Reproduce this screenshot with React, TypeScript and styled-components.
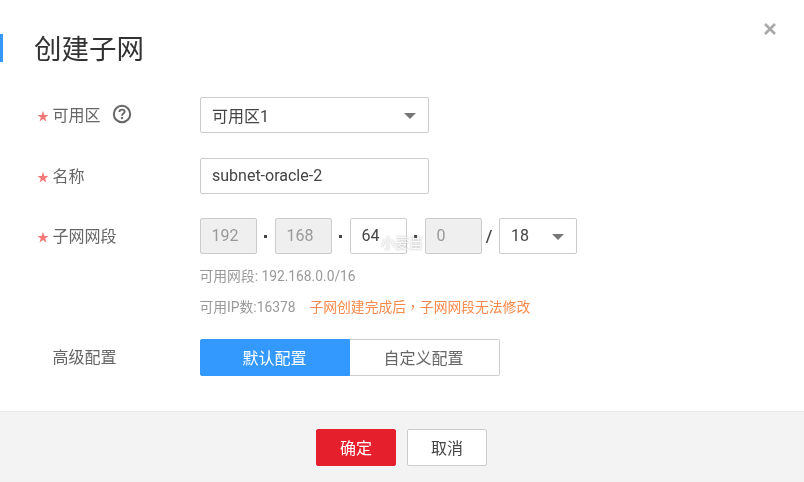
import React from 'react'
import styled, { createGlobalStyle } from 'styled-components'

const GlobalStyle = createGlobalStyle`
  html, body {
    margin: 0;
    padding: 0;
    background: #fff;
  }
  * {
    box-sizing: border-box;
  }
`

const Dialog = styled.div`
  position: relative;
  width: 804px;
  height: 482px;
  overflow: hidden;
  display: flex;
  flex-direction: column;
  background: #fff;
  font-family: Roboto, "Noto Sans CJK SC", sans-serif;
  color: #666;
  filter: blur(0.45px);
`

const Header = styled.div`
  height: 28px;
  margin-top: 34px;
  display: flex;
  align-items: center;
  justify-content: space-between;
  border-left: 3px solid #3399ff;
  padding-left: 31px;
`

const Title = styled.h1`
  margin: 0;
  padding-top: 3px;
  font-size: 27.5px;
  font-weight: 400;
  line-height: 28px;
  color: #333;
`

const Close = styled.svg`
  position: absolute;
  top: 23px;
  right: 28px;
  width: 12px;
  height: 12px;
`

const Form = styled.div`
  flex: 1;
  padding-top: 35px;
  display: flex;
  flex-direction: column;
`

const Row = styled.div<{ $gap?: number }>`
  display: flex;
  align-items: flex-start;
  margin-bottom: ${(p) => p.$gap ?? 0}px;
`

const Label = styled.div`
  width: 199.5px;
  height: 36px;
  padding-left: 37px;
  padding-bottom: 2px;
  display: flex;
  align-items: center;
  font-size: 16px;
  color: #666;
`

const Star = styled.span`
  width: 15.5px;
  font-size: 12px;
  color: #f47878;
  padding-top: 3px;
`

const Plain = styled.span`
  margin-left: 15.5px;
`

const HelpIcon = styled.svg`
  width: 20px;
  height: 20px;
  margin-left: 11px;
`

const Field = styled.div<{ $width: number }>`
  width: ${(p) => p.$width}px;
  height: 36px;
  padding: 0 12px 1px 11.5px;
  display: flex;
  align-items: center;
  justify-content: space-between;
  background: #fff;
  border: 1px solid #ccc;
  border-radius: 2px;
  font-size: 16px;
  color: #444;
`

const Caret = styled.span`
  width: 0;
  height: 0;
  margin-top: 2px;
  border-left: 6px solid transparent;
  border-right: 6px solid transparent;
  border-top: 6px solid #777;
`

const Segments = styled.div`
  display: flex;
  flex-direction: column;
`

const OctetRow = styled.div`
  display: flex;
  align-items: center;
  height: 36px;
`

const Octet = styled.div<{ $disabled?: boolean }>`
  width: 57px;
  height: 36px;
  padding: 0 0 1px 11px;
  display: flex;
  align-items: center;
  border: 1px solid #ccc;
  border-radius: 2px;
  font-size: 16px;
  background: ${(p) => (p.$disabled ? '#efefef' : '#fff')};
  color: ${(p) => (p.$disabled ? '#999' : '#444')};
`

const Dot = styled.span`
  width: 18px;
  display: flex;
  justify-content: center;
  &::before {
    content: '';
    width: 3px;
    height: 3px;
    background: #444;
  }
`

const Slash = styled.span`
  width: 17px;
  padding-right: 2px;
  text-align: center;
  font-size: 17px;
  font-weight: 500;
  color: #444;
`

const Hint = styled.div<{ $top: number }>`
  margin-top: ${(p) => p.$top}px;
  height: 20px;
  line-height: 20px;
  font-size: 13.8px;
  color: #999;
  white-space: nowrap;
`

const Warn = styled.span`
  margin-left: 14px;
  font-family: Roboto, "Noto Sans CJK TC", sans-serif;
  color: #f98a4b;
`

const Toggle = styled.div`
  display: flex;
  width: 300px;
  height: 37px;
`

const ToggleItem = styled.div<{ $active?: boolean }>`
  flex: 1;
  display: flex;
  align-items: center;
  justify-content: center;
  padding: 0 ${(p) => (p.$active ? 0 : 1)}px 2px 0;
  font-size: 16px;
  border: 1px solid ${(p) => (p.$active ? '#3399ff' : '#ccc')};
  border-left-width: ${(p) => (p.$active ? 1 : 0)}px;
  border-radius: ${(p) => (p.$active ? '2px 0 0 2px' : '0 2px 2px 0')};
  background: ${(p) => (p.$active ? '#3399ff' : '#fff')};
  color: ${(p) => (p.$active ? '#fff' : '#666')};
`

const Footer = styled.div`
  height: 71px;
  display: flex;
  justify-content: center;
  align-items: flex-start;
  gap: 11px;
  padding: 17px 1px 0 0;
  background: #f3f3f3;
  border-top: 1px solid #e8e8e8;
`

const Button = styled.button<{ $primary?: boolean }>`
  width: 80px;
  height: 37px;
  padding: 0 0 2px;
  font-family: inherit;
  font-size: 16px;
  border-radius: 2px;
  border: 1px solid ${(p) => (p.$primary ? '#e61f2d' : '#ccc')};
  background: ${(p) => (p.$primary ? '#e61f2d' : '#fff')};
  color: ${(p) => (p.$primary ? '#fff' : '#444')};
`

const Watermark = styled.span`
  position: absolute;
  left: 381px;
  top: 232px;
  font-size: 14px;
  color: rgba(255, 255, 255, 0.9);
  text-shadow: 0 0 2px rgba(120, 120, 120, 0.7);
`

const App = () => {
  return (
    <Dialog>
      <GlobalStyle />
      <Header>
        <Title>创建子网</Title>
      </Header>
      <Close viewBox="0 0 12 12">
        <path d="M1 1 L11 11 M11 1 L1 11" stroke="#a9a9a9" strokeWidth="2.6" />
      </Close>
      <Form>
        <Row $gap={24.5}>
          <Label>
            <Star>★</Star>可用区
            <HelpIcon viewBox="0 0 20 20">
              <circle cx="10" cy="10" r="8.2" fill="none" stroke="#666" strokeWidth="2" />
              <path
                d="M7.4 8 C7.4 6.4 8.6 5.6 10 5.6 C11.5 5.6 12.6 6.5 12.6 7.8 C12.6 9.6 10 9.6 10 11.7"
                fill="none"
                stroke="#666"
                strokeWidth="1.9"
              />
              <circle cx="10" cy="14" r="1.2" fill="#666" />
            </HelpIcon>
          </Label>
          <Field $width={229}>
            可用区1
            <Caret />
          </Field>
        </Row>
        <Row $gap={24.5}>
          <Label>
            <Star>★</Star>名称
          </Label>
          <Field $width={229}>subnet-oracle-2</Field>
        </Row>
        <Row $gap={22}>
          <Label>
            <Star>★</Star>子网网段
          </Label>
          <Segments>
            <OctetRow>
              <Octet $disabled>192</Octet>
              <Dot />
              <Octet $disabled>168</Octet>
              <Dot />
              <Octet>64</Octet>
              <Dot />
              <Octet $disabled>0</Octet>
              <Slash>/</Slash>
              <Field $width={78}>
                18
                <Caret />
              </Field>
            </OctetRow>
            <Hint $top={12}>可用网段: 192.168.0.0/16</Hint>
            <Hint $top={11}>
              可用IP数:16378
              <Warn>子网创建完成后，子网网段无法修改</Warn>
            </Hint>
          </Segments>
        </Row>
        <Row>
          <Label>
            <Plain>高级配置</Plain>
          </Label>
          <Toggle>
            <ToggleItem $active>默认配置</ToggleItem>
            <ToggleItem>自定义配置</ToggleItem>
          </Toggle>
        </Row>
      </Form>
      <Footer>
        <Button $primary>确定</Button>
        <Button>取消</Button>
      </Footer>
      <Watermark>小麦苗</Watermark>
    </Dialog>
  )
}

export default App
